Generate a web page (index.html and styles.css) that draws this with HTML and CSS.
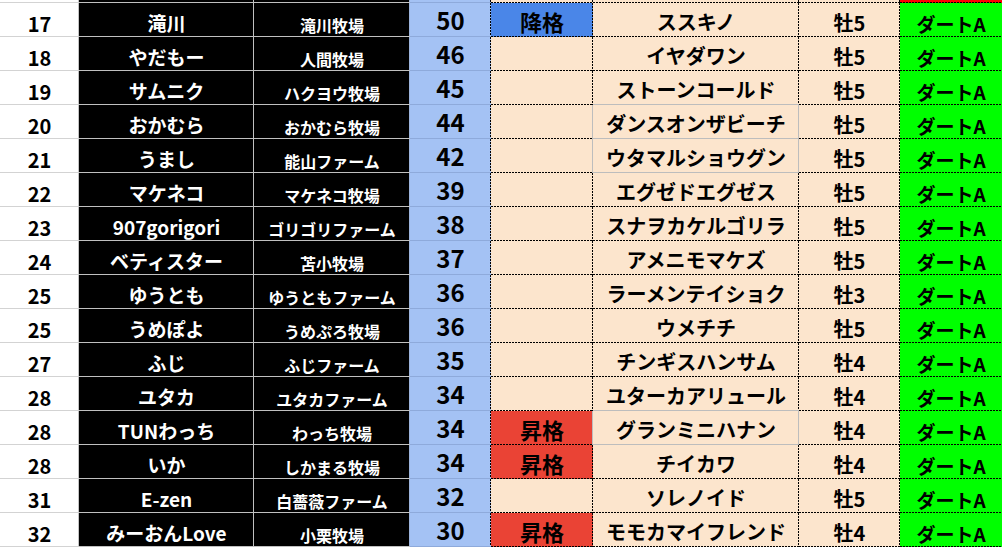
FILE: index.html
```html
<!DOCTYPE html>
<html lang="ja">
<head>
<meta charset="utf-8">
<title>Ranking</title>
<link rel="stylesheet" href="styles.css">
</head>
<body>
<div class="sheet">
  <div class="row top">
    <div class="c num"></div><div class="c name"></div><div class="c ranch"></div><div class="c score"></div><div class="c status"></div><div class="c horse"></div><div class="c sex"></div><div class="c grade red"></div>
  </div>
  <div class="row"><div class="c num">17</div><div class="c name">滝川</div><div class="c ranch">滝川牧場</div><div class="c score">50</div><div class="c status down">降格</div><div class="c horse">ススキノ</div><div class="c sex">牡5</div><div class="c grade">ダートA</div></div>
  <div class="row"><div class="c num">18</div><div class="c name">やだもー</div><div class="c ranch">人間牧場</div><div class="c score">46</div><div class="c status"></div><div class="c horse">イヤダワン</div><div class="c sex">牡5</div><div class="c grade">ダートA</div></div>
  <div class="row"><div class="c num">19</div><div class="c name">サムニク</div><div class="c ranch">ハクヨウ牧場</div><div class="c score">45</div><div class="c status"></div><div class="c horse gb">ストーンコールド</div><div class="c sex">牡5</div><div class="c grade">ダートA</div></div>
  <div class="row"><div class="c num">20</div><div class="c name">おかむら</div><div class="c ranch">おかむら牧場</div><div class="c score">44</div><div class="c status gr"></div><div class="c horse grid">ダンスオンザビーチ</div><div class="c sex">牡5</div><div class="c grade">ダートA</div></div>
  <div class="row"><div class="c num">21</div><div class="c name">うまし</div><div class="c ranch">能山ファーム</div><div class="c score">42</div><div class="c status gr"></div><div class="c horse grid">ウタマルショウグン</div><div class="c sex">牡5</div><div class="c grade">ダートA</div></div>
  <div class="row"><div class="c num">22</div><div class="c name">マケネコ</div><div class="c ranch">マケネコ牧場</div><div class="c score">39</div><div class="c status"></div><div class="c horse">エグゼドエグゼス</div><div class="c sex">牡5</div><div class="c grade">ダートA</div></div>
  <div class="row"><div class="c num">23</div><div class="c name">907gorigori</div><div class="c ranch">ゴリゴリファーム</div><div class="c score">38</div><div class="c status"></div><div class="c horse">スナヲカケルゴリラ</div><div class="c sex">牡5</div><div class="c grade">ダートA</div></div>
  <div class="row"><div class="c num">24</div><div class="c name">ベティスター</div><div class="c ranch">苫小牧場</div><div class="c score">37</div><div class="c status"></div><div class="c horse">アメニモマケズ</div><div class="c sex">牡5</div><div class="c grade">ダートA</div></div>
  <div class="row"><div class="c num">25</div><div class="c name">ゆうとも</div><div class="c ranch">ゆうともファーム</div><div class="c score">36</div><div class="c status"></div><div class="c horse">ラーメンテイショク</div><div class="c sex">牡3</div><div class="c grade">ダートA</div></div>
  <div class="row"><div class="c num">25</div><div class="c name">うめぽよ</div><div class="c ranch">うめぷろ牧場</div><div class="c score">36</div><div class="c status"></div><div class="c horse">ウメチチ</div><div class="c sex">牡5</div><div class="c grade">ダートA</div></div>
  <div class="row"><div class="c num">27</div><div class="c name">ふじ</div><div class="c ranch">ふじファーム</div><div class="c score">35</div><div class="c status"></div><div class="c horse">チンギスハンサム</div><div class="c sex">牡4</div><div class="c grade">ダートA</div></div>
  <div class="row"><div class="c num">28</div><div class="c name">ユタカ</div><div class="c ranch">ユタカファーム</div><div class="c score">34</div><div class="c status"></div><div class="c horse gb">ユターカアリュール</div><div class="c sex">牡4</div><div class="c grade">ダートA</div></div>
  <div class="row"><div class="c num">28</div><div class="c name">TUNわっち</div><div class="c ranch">わっち牧場</div><div class="c score">34</div><div class="c status up gr">昇格</div><div class="c horse grid">グランミニハナン</div><div class="c sex">牡4</div><div class="c grade">ダートA</div></div>
  <div class="row"><div class="c num">28</div><div class="c name">いか</div><div class="c ranch">しかまる牧場</div><div class="c score">34</div><div class="c status up">昇格</div><div class="c horse">チイカワ</div><div class="c sex">牡4</div><div class="c grade">ダートA</div></div>
  <div class="row"><div class="c num">31</div><div class="c name">E-zen</div><div class="c ranch">白薔薇ファーム</div><div class="c score">32</div><div class="c status"></div><div class="c horse">ソレノイド</div><div class="c sex">牡5</div><div class="c grade">ダートA</div></div>
  <div class="row"><div class="c num">32</div><div class="c name">みーおんLove</div><div class="c ranch">小栗牧場</div><div class="c score">30</div><div class="c status up">昇格</div><div class="c horse">モモカマイフレンド</div><div class="c sex">牡4</div><div class="c grade">ダートA</div></div>
</div>
</body>
</html>
```

FILE: styles.css
```css
* { box-sizing: border-box; }
html, body { margin: 0; padding: 0; background: #fff; }
body {
  width: 1002px;
  height: 547px;
  overflow: hidden;
  font-family: "Noto Sans CJK JP", "Noto Sans", sans-serif;
  font-weight: 700;
  color: #000;
}
.sheet {
  display: flex;
  flex-direction: column;
  --dotH: repeating-linear-gradient(90deg, #000 0 2px, transparent 2px 3px);
  --dotV: repeating-linear-gradient(180deg, #000 0 2px, transparent 2px 3px);
  --gray: linear-gradient(#bdbdbd, #bdbdbd);
  --none: linear-gradient(transparent, transparent);
}
.row {
  display: grid;
  grid-template-columns: 79px 175px 156px 81px 102px 206px 101px 102px;
  height: 34px;
}
.row.top { height: 3px; }
.c {
  --bline: var(--dotH);
  --rline: var(--dotV);
  --fill: #fce5cd;
  display: flex;
  align-items: center;
  justify-content: center;
  white-space: nowrap;
  overflow: hidden;
  line-height: 1;
  background:
    var(--bline) left bottom / 100% 1px no-repeat,
    var(--rline) right top / 1px 100% no-repeat,
    var(--fill);
}
.num {
  --fill: #fff;
  --bline: linear-gradient(#d3d3d3, #d3d3d3);
  --rline: linear-gradient(#c3c3c3, #c3c3c3);
  font-size: 20px;
  padding-top: 7px;
}
.name {
  --fill: #000;
  --bline: linear-gradient(#c0c0c0, #c0c0c0);
  --rline: linear-gradient(#c0c0c0, #c0c0c0);
  color: #fff;
  font-size: 19px;
  padding-top: 5px;
}
.ranch {
  --fill: #000;
  --bline: linear-gradient(#c0c0c0, #c0c0c0);
  --rline: linear-gradient(#9db4dc, #9db4dc);
  color: #fff;
  font-size: 16px;
  padding-top: 10px;
}
.score {
  --fill: #a4c2f4;
  --bline: linear-gradient(#8eaadb, #8eaadb);
  font-size: 24px;
}
.status { font-size: 22px; padding-top: 1px; }
.status.down { --fill: #4a86e8; }
.status.up { --fill: #ea4335; }
.status.gr { --rline: var(--gray); }
.horse { font-size: 20px; padding-top: 4px; }
.horse.grid { --rline: var(--gray); --bline: var(--gray); }
.horse.gb { --bline: var(--gray); }
.sex { font-size: 20px; padding-top: 6px; }
.grade {
  --fill: #00ff00;
  --rline: var(--none);
  font-size: 19px;
  padding-top: 7px;
}
.grade.red { --fill: #ff0000; }
.top .c { font-size: 0; padding: 0; }
```
